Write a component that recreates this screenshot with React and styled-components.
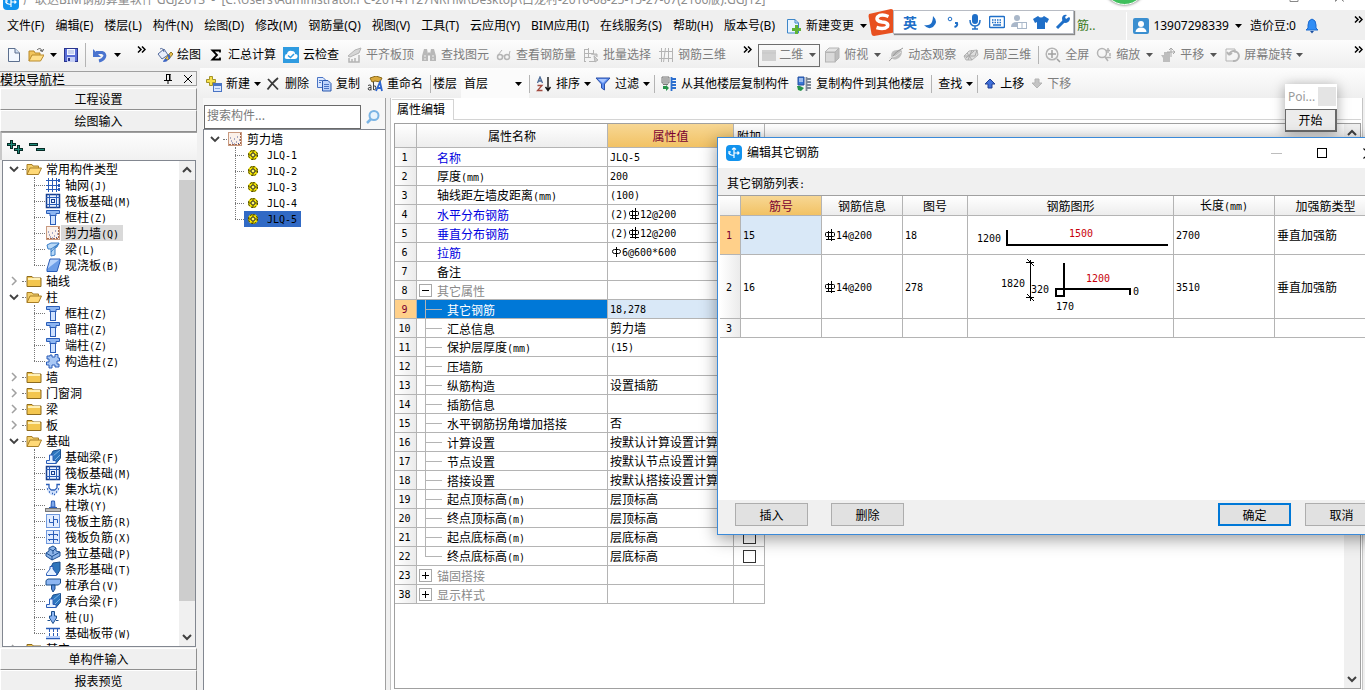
import React from "react";
import styled, { createGlobalStyle, css } from "styled-components";

const UI = `"Noto Sans", "Noto Sans CJK SC", sans-serif`;
const SONG = `"Noto Sans CJK SC", sans-serif`;

const GlobalStyle = createGlobalStyle`
  * { box-sizing: border-box; }
  html, body { margin: 0; height: 100%; overflow: hidden; }
  body { background: #f0f0f0; color: #000; font: 12px/16px ${SONG}; }
  button, input, select { font: inherit; color: inherit; margin: 0; }
  ul { list-style: none; margin: 0; padding: 0; }
  svg { display: block; flex: none; }
`;

/* ---------- text helpers ---------- */

const Latin = styled.span`
  font-family: "DejaVu Sans Mono", monospace;
  font-size: 10px;
`;
const Glyph = styled.svg`
  display: inline-block;
  vertical-align: -2px;
`;

const RebarMark = ({ ribbed }) => (
  <Glyph width="12" height="12" viewBox="0 0 12 12" fill="none" stroke="#000" aria-label="Φ">
    {ribbed
      ? <><rect x="1.500" y="3.500" width="9" height="4" rx="1" /><path d="M4.500 2V10M7.500 0V12M2 10.500H11" /></>
      : <><rect x="2.500" y="3.500" width="8" height="4" rx="2" /><path d="M6.500 1V11" /></>}
  </Glyph>
);

const Mixed = ({ children }) =>
  String(children)
    .split(/([\x20-\x7e]+|Φ|φ)/)
    .filter(Boolean)
    .map((part, i) => {
      if (part === "Φ") return <RebarMark key={i} ribbed />;
      if (part === "φ") return <RebarMark key={i} />;
      return /^[\x20-\x7e]/.test(part) ? <Latin key={i}>{part}</Latin> : part;
    });

/* ---------- icons ---------- */

const Svg = ({ children, w = 16, h = 16, ...rest }) => (
  <svg width={w} height={h} viewBox={`0 0 ${w} ${h}`} fill="none" aria-hidden="true" {...rest}>
    {children}
  </svg>
);
const Caret = ({ color = "#000" }) => (
  <Svg w={7} h={4}><path d="M0 0H7L3.5 4Z" fill={color} /></Svg>
);
const BLUE = "#2a5db8";
const GRAY = "#b4b4b4";

const icons = {
  newFile: <Svg><path d="M2 1.5H9L13.5 6V14.5H2.500V1.500Z" fill="#f2f8ff" stroke="#5c6f8e" /><path d="M9 1.500V6H13.500" fill="#cfe0f5" stroke="#5c6f8e" /></Svg>,
  open: <Svg><path d="M1 14V4H6L7 6H12V8" fill="#f2c55c" stroke="#b98a2a" /><path d="M1 14L4 8H16L12.500 14Z" fill="#ffdf8a" stroke="#b98a2a" /><path d="M9 3C11 1 13 1 14 4M12 3.500L14.500 4.500L15.500 2" stroke="#555" /></Svg>,
  save: <Svg><rect x="1.500" y="1.500" width="13" height="13" fill="#5a6fd8" stroke="#2a358f" /><rect x="4" y="2" width="8" height="6" fill="#f3f6ff" /><path d="M5 4H11M5 6H11" stroke="#9fb0e0" /><rect x="4" y="10" width="8" height="5" fill="#c6cff5" /><rect x="5" y="11" width="2" height="3" fill="#2a358f" /></Svg>,
  undo: <Svg><path d="M4 5.500H10Q14 7 12.500 10Q11 13 7 14" stroke="#4a74cf" strokeWidth="3" /><path d="M1 2V10H9Z" fill="#4a74cf" /></Svg>,
  paint: <Svg><path d="M1 7L7 2L11 8L5 12Z" fill="#e8eefb" stroke="#536a9c" /><path d="M3 2Q6 0 7 5" stroke="#536a9c" /><path d="M8 12L14 5L16 7L11 13Z" fill="#e9c14f" stroke="#94761f" /><path d="M6 15Q7 11 10 12Q12 15 6 15Z" fill="#3e66c4" /><path d="M11 8Q13 9 12 12" stroke="#3e66c4" strokeWidth="2" /></Svg>,
  sigma: <Svg><path d="M12 5.500V3.500H4.500L9 8L4.500 12.500H12V10.500" stroke="#000" strokeWidth="1.800" /></Svg>,
  cloud: <Svg><rect width="16" height="16" fill="#2f9be0" /><path d="M4 12Q1 12 2 9Q2 7 4 7Q5 3 9 4Q12 4 12 7Q15 7 14.500 10Q14 12 12 12Z" fill="#fff" /><path d="M5 8.500L7.500 10.500L11 7" stroke="#2f9be0" strokeWidth="1.500" /></Svg>,
  alignTop: <Svg><path d="M2 9L9 3L15 1L13 6L4 10Z" fill="#d6d6d6" stroke={GRAY} /><path d="M3 11V15H13V8M6 12V15M9 11V15" stroke={GRAY} strokeWidth="1.500" /></Svg>,
  find: <Svg><path d="M3 2H6L7 7V14H1V9ZM10 2H13L15 9V14H9V7Z" fill="#b8b8b8" /><path d="M7 7H9" stroke={GRAY} strokeWidth="3" /><path d="M3 9H5M11 9H13M3 12H5M11 12H13" stroke="#eee" /></Svg>,
  glasses: <Svg><circle cx="4" cy="10" r="2.500" stroke={GRAY} strokeWidth="1.500" /><circle cx="11" cy="10" r="2.500" stroke={GRAY} strokeWidth="1.500" /><path d="M6 9H9M2 8L6 3M13 8L14 4" stroke={GRAY} /></Svg>,
  batch: <Svg><path d="M1.500 2V14M1 2.500H5M1 6.500H10M1 10.500H8M6 14.500H12M5.500 1V11M10.500 3V8M3 14.500H1" stroke={GRAY} /><path d="M8 7H14V10M11 9L15 13L12 15Z" stroke={GRAY} fill="#ccc" /></Svg>,
  grid3d: <Svg><path d="M1 4.500H15M1 11.500H15M3.500 1V15M7.500 1L5.500 15M10.500 1V15M14.500 1V15" stroke={GRAY} /></Svg>,
  flat: <Svg w={14}><rect x="0" y="3" width="14" height="11" fill="#d0d0d0" /><path d="M0 6H14" stroke="#c6c6c6" /></Svg>,
  cube: <Svg><path d="M1 5L5 1H15L11 5Z" fill="#e4e4e4" stroke={GRAY} /><path d="M11 5L15 1V11L11 15Z" fill="#bdbdbd" stroke={GRAY} /><rect x="1.500" y="5.500" width="9.500" height="9.500" fill="#d9d9d9" stroke={GRAY} /></Svg>,
  orbit: <Svg><path d="M3 9Q3 3 9 3Q13 2 14 4Q14 10 9 12Q4 14 3 9Z" fill="#bebebe" /><path d="M1 14Q3 13 5 9T15 1" stroke="#969696" /><path d="M1 11Q9 10 13 5" stroke="#e5e5e5" /></Svg>,
  part3d: <Svg><path d="M1 9L6 4L14 3L15 8L9 13L3 13Z" fill="#ddd" stroke={GRAY} /><path d="M4 6L9 13M9 3L5 13M1 9H12L14 3M3 11L11 4" stroke="#a8a8a8" /></Svg>,
  fullView: <Svg><circle cx="7" cy="7" r="5.800" stroke={GRAY} strokeWidth="1.500" /><path d="M7 3V11M3 7H11M12 12L15 15" stroke="#a0a0a0" strokeWidth="1.500" /></Svg>,
  zoom: <Svg><circle cx="6" cy="6" r="4.500" stroke={GRAY} strokeWidth="1.500" /><path d="M9 10L12 14M12 1V6M10 3.500H14M10 10.500H15M14 6V9" stroke={GRAY} strokeWidth="1.500" /></Svg>,
  pan: <Svg><path d="M3 15V11L1 8L4 8V5H10V15Z" fill="#bdbdbd" /><path d="M11 1V10M7 5H15M9 3L11 1L13 3M13 3.500L15 5L13 7" stroke="#a8a8a8" /></Svg>,
  rotate: <Svg><path d="M2 2H11V6M2 2V14H10" stroke={GRAY} /><path d="M5 8A5 5 0 1 1 9 14M5 8L3 5M5 8L8 6" stroke={GRAY} strokeWidth="2" /></Svg>,
  create: <Svg><path d="M3.500 0.500H6.500V3.500H9.500V6.500H6.500V9.500H3.500V6.500H0.500V3.500H3.500Z" fill="#f7e14b" stroke="#a3932a" /><rect x="7.500" y="7.500" width="8" height="8" fill="#dbe8ff" stroke="#4a74c4" /><path d="M8 9H15" stroke="#4a74c4" strokeWidth="2" /><path d="M9 12.500H14" stroke="#8aa9dd" /></Svg>,
  cross: <Svg><path d="M3 3L13 13.500M13 2Q8 6 2.500 13.500" stroke="#3a3a3a" strokeWidth="1.800" /></Svg>,
  copy: <Svg><path d="M1.500 1.500H7L9.500 4V11.500H1.500Z" fill="#dbe8ff" stroke="#4a74c4" /><path d="M6.500 4.500H12L15 7.500V15H6.500Z" fill="#bcd3fb" stroke="#2b58ad" /><path d="M8 8.500H13M8 10.500H13M8 12.500H13M3 4.500H6M3 6.500H5" stroke="#4a74c4" /></Svg>,
  rename: <Svg><path d="M3 2L9 0L15 2L13 6L8 5L5 6Z" fill="#d9a93c" stroke="#8a6a1c" /><path d="M1 9.500Q4 8 4 10V14.500M4 11.500Q1 11 1 13Q1.500 15 4 13.500M6.500 6V14M6.500 10Q9 9 9 12Q8 15 6.500 13.500" stroke="#444" /><path d="M9 15L13 6L15 15M11 12H15" stroke="#2f66cf" strokeWidth="1.800" /></Svg>,
  sort: <Svg><path d="M1.500 7L4 1L6.500 7M2.500 5H5.500" stroke="#4b6a96" strokeWidth="1.300" /><path d="M1.500 9.500H6L1.500 14.500H6.500" stroke="#a2493f" strokeWidth="1.300" /><path d="M12 1V13M9.500 11L12 14.500L14.500 11" stroke="#111" strokeWidth="1.400" /></Svg>,
  filter: <Svg><path d="M1 2H15L9.500 8V14L6.500 12V8Z" fill="#5b8df0" stroke="#2c50a8" /><path d="M3 3H12L8 7Z" fill="#a9c6ff" /></Svg>,
  floorFrom: <Svg><path d="M1 1H8V7H1Z" fill="#e6e6e6" stroke="#777" /><path d="M2 3H7M2 5H7M2 8.500H7" stroke="#777" /><path d="M10 3H15M10 6H15M10 9H15M10 12H15M10.500 1V15" stroke="#2c6fcf" strokeWidth="1.800" /><path d="M2 10H5V9L8 12L5 15V13H2Z" fill="#27934a" /></Svg>,
  floorTo: <Svg><path d="M2 1H8V9H2Z" fill="#3b78d8" stroke="#234f9e" /><path d="M3 3H7M3 5H7" stroke="#fff" /><path d="M10 3H15M10 6H15M10 9H15M10 12H15M10.500 1V15" stroke="#7d8896" strokeWidth="1.800" /><path d="M1 10H4L8 12L5 15L2 14Z" fill="#27934a" /></Svg>,
  up: <Svg w={12}><path d="M6 3L11 8H8V12H4V8H1Z" fill="#3f6fd8" stroke="#1e3f94" /></Svg>,
  down: <Svg w={12}><path d="M6 12L11 7H8V3H4V7H1Z" fill="#c4c4c4" stroke="#b4b4b4" /></Svg>,
  change: <Svg><path d="M1.500 1.500H9L12.500 5V15H1.500Z" fill="#e8f4ff" stroke="#3e86c8" /><path d="M9 1.500V5H12.500" stroke="#3e86c8" /><path d="M9 7H12V10H15V13H12V16H9V13H6V10H9Z" fill="#5fb336" /></Svg>,
  user: <Svg><rect width="16" height="16" rx="2" fill="#3b8fd0" /><circle cx="8" cy="6" r="3" fill="#fff" /><path d="M2.500 14Q3 9.500 8 9.500T13.500 14Z" fill="#fff" /></Svg>,
  bell: <Svg><path d="M8 1Q12 2 12 7V10L14 12H2L4 10V7Q4 2 8 1Z" fill="#2f8df5" stroke="#1b6ad0" /><path d="M6 13H10L8 15.500Z" fill="#1a4fa0" /></Svg>,
  search: <Svg><circle cx="9" cy="6.500" r="4.500" stroke="#7ab4e4" strokeWidth="2" fill="#e8f4fd" /><path d="M6 10L2 14" stroke="#7ab4e4" strokeWidth="2.500" /></Svg>,
};

const memberIcons = {
  axis: <Svg><path d="M1 3.500H15M1 8.500H15M1 12.500H15M3.500 1V15M7.500 1V15M11.500 1V15" stroke={BLUE} /><path d="M14 2V5M14 7V10M14 11V14" stroke={BLUE} strokeWidth="2" /></Svg>,
  raft: <Svg><rect x="1.500" y="1.500" width="13" height="13" fill="#e8f1ff" stroke="#173f8f" strokeWidth="1.500" /><path d="M1 4.500H15M1 11.500H15M4.500 1V15M11.500 1V15" stroke={BLUE} /><rect x="6.500" y="6.500" width="3" height="3" stroke="#173f8f" /></Svg>,
  column: <Svg><path d="M1.500 1.500H14.500V4.500H11V7H5V4.500H1.500Z" fill="#8db6f2" stroke={BLUE} /><rect x="5.500" y="6.500" width="5" height="9" fill="#cfe2ff" stroke={BLUE} /></Svg>,
  wall: <Svg><rect x="1.500" y="1.500" width="13" height="13" fill="#fbf1ea" stroke="#c99a80" /><path d="M4 10H5M7 8H8M10 6H11M5 12H6M9 11H10M3 7H4M12 9H13M7 13H8M11 12.500H12" stroke="#4c5d9c" /><path d="M13.500 2V14M2 13.500H14" stroke="#a5684a" strokeDasharray="2 1" /></Svg>,
  beam: <Svg><path d="M2 4L6 2H14L12 6L10 7V14L6 15V8L3 8Z" fill="#b9d9f7" stroke="#3b7fc7" /><path d="M6 8L12 4M6 11L13 3M10 7L14 2" stroke="#3b7fc7" /></Svg>,
  slab: <Svg><path d="M5 2H15L12 12H2Z" fill="#b7d3fb" stroke={BLUE} /><path d="M2 12V14.500H12L15 4.500V2" fill="#6d9ee8" stroke={BLUE} /></Svg>,
  struct: <Svg><path d="M5 2H7V4H10V1.500H13V5H14.500V8H12V11H14V14H10V12H7V15H4V12H1.500V9H4V6H2V3H5Z" fill="#a9c8f5" stroke={BLUE} /></Svg>,
  fbeam: <Svg><path d="M5 8L8 2L15.500 0.500V9L11 14.500Z" fill="#2c76be" stroke="#1b4e8c" /><path d="M8 7L15 1M10 11L15 6" stroke="#7db2e6" /><path d="M1.500 14.500V11.500H4.500V6H8V11.500H11V14.500Z" fill="#e5f1ff" stroke={BLUE} /></Svg>,
  pit: <Svg><path d="M1 3.500H4V7L6 9H10L12 7V3.500H15" stroke={BLUE} strokeWidth="1.300" /><path d="M1 6Q3 14 8 14.500Q13 14 15 6L12 8L10 10H6L4 8Z" fill="#cfe0fb" /><path d="M2 8H3M13 8H14M4 11H5M7 12.500H8M11 11H12M9 13.500H10" stroke={BLUE} strokeWidth="1.500" /></Svg>,
  pier: <Svg><path d="M6 10L6.500 4H9.500L10 10Z" fill="#7fa9ea" stroke={BLUE} /><path d="M4 10.500H12" stroke={BLUE} /><rect x="0.500" y="11.500" width="15" height="3" fill="#bbb" stroke="#777" /></Svg>,
  rebarMain: <Svg><rect x="1.500" y="1.500" width="13" height="13" fill="#e2edff" stroke="#6f98dc" /><path d="M8.500 3V13M4.500 6V9.500H8.500M8.500 6.500H12.500V10" stroke={BLUE} /></Svg>,
  rebarNeg: <Svg><rect x="1.500" y="1.500" width="13" height="13" fill="#e2edff" stroke="#6f98dc" /><path d="M8.500 2V14M3 5.500H13M3 10.500H13M4.500 5V7M12.500 5V7M4.500 10V12M12.500 10V12" stroke={BLUE} /></Svg>,
  isolated: <Svg><path d="M1 8L4 6V3L8 1L11 3V6L15 7V11L7 15L1 11Z" fill="#8cb4e8" stroke="#1c4f93" /><path d="M1 8L7 11.500L15 7M7 11.500V15M5 4L8 6L11 3M8 6V9" stroke="#1c4f93" /></Svg>,
  strip: <Svg><path d="M5 8L8 2L15 1V9L12 14Z" fill="#3076bb" stroke="#1b4e8c" /><path d="M1.500 14.500V12.500L5 8V5.500H8V8L11.500 12.500V14.500Z" fill="#e5f1ff" stroke={BLUE} /></Svg>,
  cap: <Svg><path d="M1 3.500L3 2H15.500V6L13.500 8H1Z" fill="#8db6f2" stroke="#1b4e8c" /><path d="M6.500 8H10V12L8 15L6.500 12Z" fill="#5d8fdd" stroke="#1b4e8c" /></Svg>,
  pile: <Svg><path d="M6.500 2.500H9.500V7H11.500V9L8 14.500L4.500 9V7H6.500Z" fill="#8db6f2" stroke="#1b4e8c" /><path d="M2.500 11.500H5M11 11.500H13.500" stroke="#1b4e8c" /></Svg>,
  band: <Svg><path d="M1 3.500H15M1 13.500H15" stroke={BLUE} strokeWidth="1.500" /><path d="M4.500 4V13M8.500 4V13M12.500 4V13" stroke={BLUE} strokeDasharray="3 1" /><rect x="1" y="11" width="14" height="2" fill="#bcd3fb" /></Svg>,
  folder: <Svg><path d="M1 13.500V3.500H6L7.500 5H15V13.500Z" fill="#f3c64f" stroke="#8d6b1f" /><path d="M2 6H14" stroke="#fff0b5" strokeWidth="2" /></Svg>,
  folderOpen: <Svg><path d="M1 13.500V3.500H6L7 5H12.500V7" fill="#f3cf6b" stroke="#a87e26" /><path d="M1 13.500L4 7H15.500L12.500 13.500Z" fill="#ffd977" stroke="#a87e26" /></Svg>,
  gear: <Svg w={12} h={12}><circle cx="6" cy="6" r="5" fill="#f4e400" /><circle cx="6" cy="6" r="4.500" stroke="#2d2a00" strokeDasharray="2 1.500" /><path d="M6 1V11M1 6H11" stroke="#4d4900" /><circle cx="6" cy="6" r="2" fill="#fff96a" stroke="#333" /></Svg>,
};

const Logo = () => (
  <Svg>
    <rect width="16" height="16" rx="4" fill="#1293ee" />
    <path d="M8 3V13M6 4.500L8 3L10 4.500M3 8Q4 11 8 10M8 8H13M11.500 6.500L13 8L11.500 9.500M3 6V9M5 7H3" stroke="#fff" strokeWidth="1.200" />
  </Svg>
);

/* ---------- frame ---------- */

const Window = styled.div`
  position: relative;
  display: flex;
  flex-direction: column;
  height: 100vh;
  overflow: hidden;
`;
const TitleStrip = styled.header`
  display: flex;
  align-items: flex-end;
  gap: 4px;
  height: 10px;
  flex: none;
  padding: 0 20px 0 3px;
  overflow: hidden;
  background: #fff;
  color: #8c8c8c;
  font-family: ${UI};
  white-space: pre;
`;
const TitleText = styled.span`
  flex: 1;
  line-height: 20px;
`;
const MenuBar = styled.nav`
  display: flex;
  align-items: center;
  height: 30px;
  flex: none;
  padding: 2px 2px 0 7px;
  background: #efefef;
  font-family: ${UI};
  white-space: nowrap;
`;
const plainButton = css`
  display: flex;
  align-items: center;
  flex: none;
  padding: 0;
  border: 0;
  background: none;
  white-space: nowrap;
`;
const MenuItem = styled.button`
  ${plainButton}
  gap: 4px;
  margin-right: 11px;
`;
const Account = styled.div`
  display: flex;
  align-items: center;
  gap: 6px;
  margin-left: auto;
  padding: 0 32px 0 6px;
  height: 28px;
  border-left: 1px solid #fff;
`;
const AccountItem = styled(MenuItem)`
  margin-right: 2px;
`;
const Toolbar = styled.div`
  display: flex;
  align-items: center;
  height: ${(p) => p.$h}px;
  flex: none;
  padding: 2px 2px 0 6px;
  background: linear-gradient(#fdfdfd, #efefef);
  font-family: ${UI};
  white-space: nowrap;
`;
const ToolGroup = styled.div`
  display: flex;
  align-items: center;
  flex: none;
  padding-left: 5px;
`;
const ToolButton = styled.button`
  ${plainButton}
  height: 20px;
  gap: 4px;
  margin-right: ${(p) => (p.$bare ? 6 : 7)}px;
  color: ${(p) => (p.$off ? "#7d7d7d" : "#000")};
`;
const CaretSlot = styled.span`
  display: flex;
  padding-left: ${(p) => (p.$tight ? 0 : 2)}px;
  margin-right: ${(p) => (p.$tight ? -3 : 0)}px;
`;
const Divider = styled.i`
  width: 1px;
  height: ${(p) => p.$h || 18}px;
  flex: none;
  margin-right: ${(p) => (p.$tight ? 2 : 6)}px;
  background: #b4b4b4;
`;
const More = styled.button`
  ${plainButton}
  align-self: flex-start;
  margin: 4px ${(p) => (p.$end ? "0" : "6px")} 0 ${(p) => (p.$end ? "auto" : "10px")};
`;
const MoreIcon = ({ end }) => (
  <More $end={end} aria-label="更多">
    <Svg w={9} h={7}><path d="M1 0.500L4 3.500L1 6.500M5 0.500L8 3.500L5 6.500" stroke="#000" strokeWidth="1.500" /></Svg>
  </More>
);
const MenuMore = styled(More)`
  margin: 4px 0 0;
`;
const ComboLabel = styled.label`
  margin-right: 4px;
`;
const Combo = styled.span`
  display: flex;
  align-items: center;
  gap: 3px;
  flex: none;
  width: ${(p) => p.$w}px;
  height: ${(p) => (p.$boxed ? 23 : 28)}px;
  margin-right: ${(p) => (p.$boxed ? 4 : 0)}px;
  padding: 0 ${(p) => (p.$boxed ? 3 : 7)}px 0 3px;
  border: ${(p) => (p.$boxed ? "1px solid #6e6e6e" : 0)};
  background: ${(p) => (p.$boxed ? "none" : "#fbfbfb")};
  color: ${(p) => (p.$boxed ? "#7d7d7d" : "#000")};
`;
const Select = styled.select`
  flex: 1;
  min-width: 0;
  padding: 0;
  border: 0;
  background: none;
  appearance: none;
  color: inherit;
`;

const Tool = ({ icon, children, off, caret, tight }) => (
  <ToolButton $off={off} $bare={!children} disabled={off}>
    {icons[icon]}
    {children}
    {caret && <CaretSlot $tight={tight}><Caret color={off ? "#555" : "#000"} /></CaretSlot>}
  </ToolButton>
);

const Workspace = styled.div`
  display: flex;
  flex: 1;
  min-height: 0;
`;

/* ---------- navigation panel ---------- */

const Nav = styled.aside`
  display: flex;
  flex-direction: column;
  width: 197px;
  flex: none;
  padding-top: 3px;
  margin: 0 3px -2px 0;
`;
const NavTitle = styled.div`
  display: flex;
  align-items: center;
  gap: 12px;
  height: 15px;
  margin-bottom: 2px;
  padding-right: 4px;
  border: 1px solid #a0a0a0;
  border-left: 0;
  font-size: 13px;
  line-height: 13px;
`;
const NavName = styled.span`
  flex: 1;
`;
const NavButton = styled.button`
  height: 22px;
  flex: none;
  padding: 0;
  border: 1px solid #8f8f8f;
  border-top-color: #fff;
  border-left-color: #fff;
  background: #f0f0f0;
  font-size: 12px;
  line-height: 20px;
`;
const NavTools = styled.div`
  display: flex;
  gap: 6px;
  height: 28px;
  flex: none;
  padding: 7px 5px;
  border-top: 1px solid #a0a0a0;
  border-left: 2px solid #c8c8c8;
  background: linear-gradient(#fdfdfd, #f1f1f1);
`;
const IconButton = styled.button`
  ${plainButton}
`;
const TreeBox = styled.div`
  display: flex;
  flex: 1;
  min-height: 0;
  margin: 0 1px 1px 2px;
  border: 1px solid #828790;
  background: #fff;
`;
const TreeView = styled.ul`
  flex: 1;
  overflow: hidden;
  padding: ${(p) => p.$top}px 0 0 5px;
`;
const TreeRow = styled.div`
  display: flex;
  align-items: center;
  height: 16px;
  white-space: nowrap;
`;
const Twisty = styled.button`
  ${plainButton}
  justify-content: center;
  width: 12px;
  height: 16px;
  margin-right: 2px;
`;
const Children = styled.ul`
  position: relative;
  margin-left: 26px;
  &::before {
    content: "";
    position: absolute;
    top: 0;
    bottom: 8px;
    left: 0;
    border-left: 1px dotted #777;
  }
`;
const Stem = styled.i`
  width: ${(p) => p.$w}px;
  border-top: 1px dotted #777;
`;
const RowLabel = styled.span`
  height: 16px;
  line-height: 16px;
  padding: 0 4px;
  background: ${(p) => (p.$picked ? "#d9d9d9" : "none")};
`;
const MemberRow = styled.div`
  display: flex;
  align-items: center;
  gap: 8px;
  width: 57px;
  height: 16px;
  padding-left: 3px;
  background: ${(p) => (p.$selected ? "#316ac5" : "none")};
`;
const ScrollBar = styled.div`
  display: flex;
  flex-direction: column;
  align-items: center;
  justify-content: space-between;
  width: 16px;
  flex: none;
  padding: 5px 0;
  background: #f0f0f0;
`;
const Thumb = styled.i`
  flex: 1;
  width: 16px;
  margin: 6px 0 32px;
  background: #cdcdcd;
`;
const Chevron = ({ dir, color = "#404040" }) => {
  const d = { up: "M1 6L5 2L9 6", down: "M1 2L5 6L9 2" }[dir];
  return <Svg w={10} h={8}><path d={d} stroke={color} strokeWidth="2" /></Svg>;
};
const Twist = ({ open }) => (
  <Twisty aria-label={open ? "折叠" : "展开"}>
    {open
      ? <Svg w={10} h={8}><path d="M1 2L5 6L9 2" stroke="#404040" strokeWidth="1.800" /></Svg>
      : <Svg w={8} h={10}><path d="M2 1L6 5L2 9" stroke="#a0a0a0" strokeWidth="1.500" /></Svg>}
  </Twisty>
);

const navTree = [
  { name: "常用构件类型", items: [["axis", "轴网(J)"], ["raft", "筏板基础(M)"], ["column", "框柱(Z)"], ["wall", "剪力墙(Q)", true], ["beam", "梁(L)"], ["slab", "现浇板(B)"]] },
  { name: "轴线" },
  { name: "柱", items: [["column", "框柱(Z)"], ["column", "暗柱(Z)"], ["column", "端柱(Z)"], ["struct", "构造柱(Z)"]] },
  { name: "墙" },
  { name: "门窗洞" },
  { name: "梁" },
  { name: "板" },
  { name: "基础", items: [["fbeam", "基础梁(F)"], ["raft", "筏板基础(M)"], ["pit", "集水坑(K)"], ["pier", "柱墩(Y)"], ["rebarMain", "筏板主筋(R)"], ["rebarNeg", "筏板负筋(X)"], ["isolated", "独立基础(P)"], ["strip", "条形基础(T)"], ["cap", "桩承台(V)"], ["fbeam", "承台梁(F)"], ["pile", "桩(U)"], ["band", "基础板带(W)"]] },
  { name: "其它" },
];

const Navigation = () => (
  <Nav>
    <NavTitle>
      <NavName>模块导航栏</NavName>
      <IconButton aria-label="固定"><Svg w={8} h={10}><path d="M2 0.500H6.500M2.500 0V6M5.500 0V6M6 0V6M0 6.500H8M4 7V10" stroke="#000" /></Svg></IconButton>
      <IconButton aria-label="关闭"><Svg w={8} h={8}><path d="M0 0L8 8M8 0L0 8" stroke="#000" /></Svg></IconButton>
    </NavTitle>
    <NavButton>工程设置</NavButton>
    <NavButton>绘图输入</NavButton>
    <NavTools>
      <IconButton aria-label="全部展开"><Svg w={16} h={14}><path d="M4.500 0V9M0 4.500H9M11.500 5V14M7 9.500H16" stroke="#072b26" strokeWidth="3" /><path d="M4.500 1V8M1 4.500H8M11.500 6V13M8 9.500H15" stroke="#1d8a78" /></Svg></IconButton>
      <IconButton aria-label="全部折叠"><Svg w={16} h={14}><path d="M0 4.500H9M7 9.500H16" stroke="#072b26" strokeWidth="3" /><path d="M1 4.500H8M8 9.500H15" stroke="#1d8a78" /></Svg></IconButton>
    </NavTools>
    <TreeBox>
      <TreeView $top={0}>
        {navTree.map((g) => (
          <li key={g.name}>
            <TreeRow>
              <Twist open={!!g.items} />
              <Stem $w={4} />
              {memberIcons[g.items ? "folderOpen" : "folder"]}
              <RowLabel>{g.name}</RowLabel>
            </TreeRow>
            {g.items && (
              <Children>
                {g.items.map(([icon, label, picked]) => (
                  <li key={label}>
                    <TreeRow>
                      <Stem $w={11} />
                      {memberIcons[icon]}
                      <RowLabel $picked={picked}><Mixed>{label}</Mixed></RowLabel>
                    </TreeRow>
                  </li>
                ))}
              </Children>
            )}
          </li>
        ))}
      </TreeView>
      <ScrollBar><Chevron dir="up" /><Thumb /><Chevron dir="down" /></ScrollBar>
    </TreeBox>
    <NavButton>单构件输入</NavButton>
    <NavButton>报表预览</NavButton>
  </Nav>
);

/* ---------- member list ---------- */

const MainArea = styled.main`
  display: flex;
  flex-direction: column;
  flex: 1;
  min-width: 0;
`;
const Panels = styled.div`
  display: flex;
  flex: 1;
  min-height: 0;
  padding-left: 3px;
`;
const MemberPanel = styled.section`
  display: flex;
  flex-direction: column;
  width: 183px;
  flex: none;
  padding-top: 6px;
  margin-right: 4px;
  border-right: 1px solid #a0a0a0;
  background: #f7f7f7;
`;
const SearchRow = styled.form`
  display: flex;
  align-items: center;
  gap: 4px;
  height: 25px;
  padding-left: 1px;
`;
const SearchInput = styled.input`
  width: 157px;
  height: 24px;
  padding: 0 2px 4px;
  border: 1px solid #6a6a6a;
  background: #fff;
  &::placeholder { color: #7a7a7a; opacity: 1; }
`;
const MemberBox = styled(TreeBox)`
  margin: 0;
  border-width: 1px 0 0 1px;
`;

const Members = () => (
  <MemberPanel>
    <SearchRow onSubmit={(e) => e.preventDefault()}>
      <SearchInput type="text" aria-label="搜索构件" placeholder="搜索构件..." />
      <IconButton aria-label="搜索">{icons.search}</IconButton>
    </SearchRow>
    <MemberBox>
      <TreeView $top={1}>
        <li>
          <TreeRow><Twist open /><Stem $w={4} />{memberIcons.wall}<RowLabel>剪力墙</RowLabel></TreeRow>
          <Children>
            {[1, 2, 3, 4, 5].map((n) => (
              <li key={n}>
                <TreeRow>
                  <Stem $w={9} />
                  <MemberRow $selected={n === 5}>{memberIcons.gear}<span><Mixed>{`JLQ-${n}`}</Mixed></span></MemberRow>
                </TreeRow>
              </li>
            ))}
          </Children>
        </li>
      </TreeView>
    </MemberBox>
  </MemberPanel>
);

/* ---------- property grid ---------- */

const LINE = "#b4b4b4";
const Properties = styled.section`
  display: flex;
  flex-direction: column;
  flex: 1;
  min-width: 0;
  margin-right: 2px;
  padding: 1px;
  border-left: 1px solid #c4c4c4;
  border-right: 1px solid #c4c4c4;
  background: #fff;
`;
const TabStrip = styled.div`
  display: flex;
  height: 21px;
  flex: none;
  margin-bottom: 3px;
  border-bottom: 1px solid #d4d4d4;
`;
const Tab = styled.button`
  height: 21px;
  padding: 0 8px 2px 5px;
  border: 1px solid #d4d4d4;
  border-width: 1px 1px 0 0;
  background: #fff;
`;
const GridPanel = styled.div`
  display: flex;
  flex: 1;
  min-height: 0;
  margin-left: 2px;
  border: 1px solid #a0a0a0;
`;
const GridArea = styled.div`
  flex: 1;
  min-width: 0;
  background: linear-gradient(#fff, #efefef) top / 100% 24px no-repeat;
`;
const Grid = styled.table`
  width: ${(p) => p.$w};
  table-layout: fixed;
  border-collapse: separate;
  border-spacing: 0;
  background: #fff;
  white-space: nowrap;
`;
const HeadCell = styled.th`
  height: ${(p) => p.$h}px;
  padding: 0;
  border-right: 1px solid ${LINE};
  border-bottom: 1px solid ${LINE};
  background: ${(p) => (p.$hot ? "linear-gradient(#f7d794, #f2c264)" : "linear-gradient(#fff, #ededed)")};
  color: ${(p) => (p.$hot ? "#7a0030" : "#000")};
  font-weight: normal;
  overflow: hidden;
`;
const NumCell = styled.th`
  height: ${(p) => p.$h || 19}px;
  padding: 0 2px 0 0;
  border-right: 1px solid ${LINE};
  border-bottom: 1px solid ${LINE};
  background: ${(p) => (p.$hot ? "#ffd08a" : "linear-gradient(90deg, #fff, #ebebeb)")};
  color: ${(p) => (p.$hot ? "#7a0030" : "#000")};
  font-weight: normal;
`;
const Cell = styled.td`
  padding: 0 0 0 ${(p) => (p.$flush ? 0 : 2)}px;
  border-right: 1px solid ${LINE};
  border-bottom: 1px solid ${LINE};
  background: ${(p) => (p.$bg ? p.$bg : "#fff")};
  overflow: hidden;
`;
const NameBox = styled.div`
  display: flex;
  align-items: center;
  height: 18px;
  padding-left: ${(p) => (p.$root ? 20 : 2)}px;
  padding-top: 1px;
  color: ${(p) => p.$color};
`;
const Expander = styled.button`
  ${plainButton}
  width: 13px;
  height: 13px;
  margin-right: 5px;
  border: 1px solid #a8a8a8;
  background: #fff;
`;
const Branch = styled.i`
  align-self: stretch;
  position: relative;
  width: 17px;
  margin: -1px 5px 0 6px;
  &::before {
    content: "";
    position: absolute;
    left: 0;
    top: 0;
    bottom: ${(p) => (p.$last ? 9 : 0)}px;
    border-left: 1px solid ${LINE};
  }
  &::after {
    content: "";
    position: absolute;
    left: 0;
    right: 0;
    top: 9px;
    border-top: 1px solid ${LINE};
  }
`;
const Check = styled.input`
  display: block;
  width: 13px;
  height: 13px;
  margin: 0 auto;
  border: 1px solid #333;
  background: #fff;
  appearance: none;
`;

const props = [
  [1, "名称", "JLQ-5", "link"],
  [2, "厚度(mm)", "200", "root"],
  [3, "轴线距左墙皮距离(mm)", "(100)", "root"],
  [4, "水平分布钢筋", "(2)Φ12@200", "link"],
  [5, "垂直分布钢筋", "(2)Φ12@200", "link"],
  [6, "拉筋", "φ6@600*600", "link"],
  [7, "备注", "", "root"],
  [8, "其它属性", "", "open"],
  [9, "其它钢筋", "18,278", "child"],
  [10, "汇总信息", "剪力墙", "child"],
  [11, "保护层厚度(mm)", "(15)", "child"],
  [12, "压墙筋", "", "child"],
  [13, "纵筋构造", "设置插筋", "child"],
  [14, "插筋信息", "", "child"],
  [15, "水平钢筋拐角增加搭接", "否", "child"],
  [16, "计算设置", "按默认计算设置计算", "child"],
  [17, "节点设置", "按默认节点设置计算", "child"],
  [18, "搭接设置", "按默认搭接设置计算", "child"],
  [19, "起点顶标高(m)", "层顶标高", "child"],
  [20, "终点顶标高(m)", "层顶标高", "child"],
  [21, "起点底标高(m)", "层底标高", "child"],
  [22, "终点底标高(m)", "层底标高", "last"],
  [23, "锚固搭接", "", "closed"],
  [38, "显示样式", "", "closed"],
];

const PropName = ({ name, kind, hot }) => {
  const root = kind === "root" || kind === "link";
  const group = kind === "open" || kind === "closed";
  const color = hot ? "#fff" : kind === "link" ? "#0000e0" : group ? "#8a8a8a" : "#000";
  return (
    <NameBox $root={root} $color={color}>
      {group && (
        <Expander aria-label={name}>
          <Svg w={11} h={11}><path d={kind === "open" ? "M2 5.500H9" : "M2 5.500H9M5.500 2V9"} stroke="#000" /></Svg>
        </Expander>
      )}
      {!root && !group && <Branch $last={kind === "last"} />}
      <span><Mixed>{name}</Mixed></span>
    </NameBox>
  );
};

const PropertyEditor = () => (
  <Properties>
    <TabStrip><Tab>属性编辑</Tab></TabStrip>
    <GridPanel>
      <GridArea>
        <Grid $w="370px">
          <colgroup><col width="22" /><col width="191" /><col width="126" /><col width="31" /></colgroup>
          <thead>
            <tr><HeadCell $h={24} /><HeadCell>属性名称</HeadCell><HeadCell $hot>属性值</HeadCell><HeadCell>附加</HeadCell></tr>
          </thead>
          <tbody>
            {props.map(([n, name, value, kind]) => {
              const hot = n === 9;
              return (
                <tr key={n}>
                  <NumCell scope="row" $hot={hot}><Mixed>{n}</Mixed></NumCell>
                  <Cell $flush $bg={hot && "#0078d7"}><PropName name={name} kind={kind} hot={hot} /></Cell>
                  <Cell $bg={hot && "#d9e8f7"}><Mixed>{value}</Mixed></Cell>
                  <Cell $flush>{n > 1 && n < 23 && n !== 8 && <Check type="checkbox" aria-label={`附加 ${name}`} />}</Cell>
                </tr>
              );
            })}
          </tbody>
        </Grid>
      </GridArea>
      <ScrollBar><Chevron dir="up" /><Chevron dir="down" /></ScrollBar>
    </GridPanel>
  </Properties>
);

/* ---------- rebar dialog ---------- */

const Dialog = styled.section`
  position: absolute;
  top: 137px;
  left: 717px;
  right: -25px;
  display: flex;
  flex-direction: column;
  border: 1px solid #3b8ad9;
  background: #f0f0f0;
  box-shadow: 0 4px 16px rgba(0, 0, 0, 0.4);
`;
const DialogTitle = styled.header`
  display: flex;
  align-items: center;
  gap: 5px;
  height: 30px;
  padding-left: 8px;
  background: #fff;
  font-family: ${UI};
`;
const DialogName = styled.h2`
  flex: 1;
  margin: 0;
  font: inherit;
`;
const SystemButton = styled.button`
  ${plainButton}
  justify-content: center;
  width: 41px;
  height: 29px;
`;
const DialogLabel = styled.p`
  height: 27px;
  margin: 0;
  padding: 7px 9px 0;
`;
const DialogBody = styled.div`
  height: 305px;
  padding-left: 2px;
  border-top: 1px solid #a0a0a0;
  background: #fff;
`;
const ShapeCell = styled(Cell)`
  padding: 0;
`;
const Shape = styled.svg`
  font: 10px "DejaVu Sans Mono", monospace;
`;
const DialogFooter = styled.footer`
  display: flex;
  gap: 23px;
  height: 34px;
  padding: 3px 11px 0 17px;
`;
const PushButton = styled.button`
  width: 73px;
  height: 23px;
  padding: 0;
  border: ${(p) => (p.$primary ? "2px solid #0078d7" : "1px solid #adadad")};
  background: #e1e1e1;
`;
const Confirm = styled.div`
  display: flex;
  gap: 14px;
  margin-left: auto;
`;

const LShape = () => (
  <Shape width="205" height="38" fill="#000">
    <text x="9" y="26">1200</text>
    <path d="M39 14V29H200" fill="none" stroke="#000" strokeWidth="2" />
    <text x="101" y="21" fill="#c8000a">1500</text>
  </Shape>
);
const HookShape = () => (
  <Shape width="205" height="63" fill="#000">
    <text x="33" y="32">1820</text>
    <path d="M62.500 5V46M58 7.500H66M58 42.500H66M59 4L66 11M59 39L66 46" fill="none" stroke="#000" />
    <text x="63" y="38">320</text>
    <path d="M96 8V41H88V34H162V40" fill="none" stroke="#000" strokeWidth="2" />
    <text x="165" y="40">0</text>
    <text x="118" y="27" fill="#c8000a">1200</text>
    <text x="88" y="55">170</text>
  </Shape>
);

const rebarRows = [
  { n: 1, h: 39, id: "15", info: "Φ14@200", no: "18", shape: <LShape />, len: "2700", type: "垂直加强筋" },
  { n: 2, h: 64, id: "16", info: "Φ14@200", no: "278", shape: <HookShape />, len: "3510", type: "垂直加强筋" },
  { n: 3, h: 19, id: "", info: "", no: "", len: "", type: "" },
];

const RebarDialog = () => (
  <Dialog role="dialog" aria-label="编辑其它钢筋">
    <DialogTitle>
      <Logo />
      <DialogName>编辑其它钢筋</DialogName>
      <SystemButton aria-label="最小化"><Svg w={11} h={11}><path d="M0 5.500H11" stroke="#bdbdbd" /></Svg></SystemButton>
      <SystemButton aria-label="最大化"><Svg w={11} h={11}><rect x="0.500" y="0.500" width="9" height="9" stroke="#000" /></Svg></SystemButton>
      <SystemButton aria-label="关闭"><Svg w={11} h={11}><path d="M0.500 0.500L10.500 10.500M10.500 0.500L0.500 10.500" stroke="#000" strokeWidth="1.200" /></Svg></SystemButton>
    </DialogTitle>
    <DialogLabel><Mixed>其它钢筋列表:</Mixed></DialogLabel>
    <DialogBody>
      <Grid $w="657px">
        <colgroup><col width="21" /><col width="81" /><col width="81" /><col width="65" /><col width="206" /><col width="101" /><col width="102" /></colgroup>
        <thead>
          <tr>
            <HeadCell $h={20} />
            <HeadCell $hot>筋号</HeadCell>
            {["钢筋信息", "图号", "钢筋图形", "长度(mm)", "加强筋类型"].map((t) => <HeadCell key={t}><Mixed>{t}</Mixed></HeadCell>)}
          </tr>
        </thead>
        <tbody>
          {rebarRows.map((r) => (
            <tr key={r.n}>
              <NumCell scope="row" $h={r.h} $hot={r.n === 1}><Mixed>{r.n}</Mixed></NumCell>
              <Cell $bg={r.n === 1 && "#d9e8f7"}><Mixed>{r.id}</Mixed></Cell>
              <Cell><Mixed>{r.info}</Mixed></Cell>
              <Cell><Mixed>{r.no}</Mixed></Cell>
              <ShapeCell>{r.shape}</ShapeCell>
              <Cell><Mixed>{r.len}</Mixed></Cell>
              <Cell>{r.type}</Cell>
            </tr>
          ))}
        </tbody>
      </Grid>
    </DialogBody>
    <DialogFooter>
      <PushButton>插入</PushButton>
      <PushButton>删除</PushButton>
      <Confirm><PushButton $primary>确定</PushButton><PushButton>取消</PushButton></Confirm>
    </DialogFooter>
  </Dialog>
);

/* ---------- floating widgets ---------- */

const MiniWindow = styled.section`
  position: absolute;
  top: 84px;
  right: 28px;
  width: 52px;
  box-shadow: 0 2px 12px rgba(0, 0, 0, 0.35);
`;
const MiniTitle = styled.div`
  display: flex;
  align-items: center;
  justify-content: space-between;
  height: 25px;
  padding: 0 1px 0 3px;
  background: #fff;
  color: #9a9a9a;
  font-family: ${UI};
`;
const MiniClose = styled.button`
  width: 18px;
  height: 19px;
  padding: 0;
  border: 0;
  background: #e4e4e4;
`;
const MiniStart = styled.button`
  display: block;
  width: 100%;
  height: 23px;
  padding: 0;
  border: 1px solid #696969;
  border-width: 1px 2px 2px 1px;
  background: #ececec;
`;
const ImeBar = styled.div`
  position: absolute;
  top: 8px;
  left: 868px;
  display: flex;
  align-items: center;
`;
const ImeKeys = styled.div`
  display: flex;
  align-items: center;
  gap: 6px;
  height: 24px;
  margin-left: -3px;
  padding: 0 2px 0 9px;
  border: 1px solid #b8bcc4;
  background: #fff;
  box-shadow: 1px 1px 1px #888;
  color: #1f6fc8;
  font-weight: bold;
  font-size: 14px;
`;
const Ball = styled.div`
  position: absolute;
  top: -38px;
  right: 219px;
  width: 43px;
  height: 43px;
  border: 1px solid #fff;
  border-radius: 50%;
  background: #3fbf5c;
  box-shadow: 0 0 3px #555;
`;
const KEY = "#1f6fc8";

const Ime = () => (
  <ImeBar>
    <Svg w={28} h={28}>
      <path d="M1 6L23 1Q25 1 25.500 3L28 22Q28 24 26 24.500L6 28Q4 28 3.500 26L0.500 8Z" fill="#e8501f" />
      <path d="M20.500 8.500Q13 5.500 9.500 9Q7.500 13 14 14Q21 14.500 19.500 18.500Q16 22 8.500 19.500" stroke="#fff" strokeWidth="3.500" />
    </Svg>
    <ImeKeys>
      <span>英</span>
      <Svg><path d="M10 2Q16 8 10 13Q5 16 1 11Q7 12 9 8Q10 5 10 2Z" fill={KEY} /></Svg>
      <Svg><circle cx="5" cy="5" r="1.800" stroke={KEY} /><path d="M10 9H12Q13 12 9.500 13" stroke={KEY} strokeWidth="2" /></Svg>
      <Svg><rect x="5" y="0" width="6" height="10" rx="3" fill={KEY} /><path d="M3 6Q3 12 8 12T13 6M8 12V15M5 15H11" stroke={KEY} strokeWidth="1.500" /></Svg>
      <Svg><rect x="0.500" y="2.500" width="15" height="11" rx="1" stroke={KEY} strokeWidth="1.500" /><path d="M3 6H13M3 8.500H13" stroke={KEY} strokeWidth="1.500" strokeDasharray="1.500 1" /><path d="M4 11H12" stroke={KEY} strokeWidth="1.500" /></Svg>
      <Svg><circle cx="6" cy="4" r="3" fill="#a9b7c9" /><path d="M0 13Q0 8 6 8V13Z" fill="#a9b7c9" /><rect x="6.500" y="8.500" width="9" height="6" stroke="#a9b7c9" fill="#fff" /><path d="M11 9V14" stroke="#a9b7c9" /></Svg>
      <Svg><path d="M5 2Q8 5 11 2L16 5L14 9L12 8V15H4V8L2 9L0 5Z" fill={KEY} /></Svg>
      <Svg><path d="M2 14L9 7" stroke={KEY} strokeWidth="3" /><path d="M14 3L11 5L10 3L12 1Q8 0 7 4Q7 9 11 9Q15 8 15 4Z" fill={KEY} /></Svg>
    </ImeKeys>
  </ImeBar>
);

const AfterIme = styled.span`
  margin-left: 199px;
  color: #3a7a1c;
`;

const menus = ["文件(F)", "编辑(E)", "楼层(L)", "构件(N)", "绘图(D)", "修改(M)", "钢筋量(Q)", "视图(V)", "工具(T)", "云应用(Y)", "BIM应用(I)", "在线服务(S)", "帮助(H)", "版本号(B)"];

export default function App() {
  return (
    <Window>
      <GlobalStyle />
      <TitleStrip>
        <Logo />
        <TitleText>{"广联达BIM钢筋算量软件 GGJ2013  -  [C:\\Users\\Administrator.PC-20141127NRHM\\Desktop\\白龙村-2016-08-25-15-27-07(2166版).GGJ12]"}</TitleText>
        <Svg w={56} h={10}><path d="M1 0V1.500H9V0M46 1L49 -2M54 1L51 -2M46 1.500L48 0M55 1.500L53 0" stroke="#888" /></Svg>
      </TitleStrip>
      <MenuBar>
        {menus.map((m) => <MenuItem key={m}>{m}</MenuItem>)}
        <MenuItem>{icons.change}新建变更<CaretSlot><Caret /></CaretSlot></MenuItem>
        <AfterIme>筋..</AfterIme>
        <Account>
          <AccountItem>{icons.user}13907298339<CaretSlot><Caret /></CaretSlot></AccountItem>
          <AccountItem>造价豆:0</AccountItem>
          <AccountItem aria-label="通知">{icons.bell}</AccountItem>
        </Account>
        <MenuMore aria-label="更多菜单">
          <Svg w={9} h={7}><path d="M1 0.500L4 3.500L1 6.500M5 0.500L8 3.500L5 6.500" stroke="#000" strokeWidth="1.500" /></Svg>
        </MenuMore>
      </MenuBar>
      <Toolbar $h={28}>
        <Tool icon="newFile" />
        <Tool icon="open" caret />
        <Tool icon="save" />
        <Divider $h={24} />
        <Tool icon="undo" caret />
        <MoreIcon />
        <ToolGroup>
          <Tool icon="paint">绘图</Tool>
          <Tool icon="sigma">汇总计算</Tool>
          <Tool icon="cloud">云检查</Tool>
          <Tool icon="alignTop" off>平齐板顶</Tool>
          <Tool icon="find" off>查找图元</Tool>
          <Tool icon="glasses" off>查看钢筋量</Tool>
          <Tool icon="batch" off>批量选择</Tool>
          <Tool icon="grid3d" off>钢筋三维</Tool>
        </ToolGroup>
        <MoreIcon />
        <Combo $w={62} $boxed>{icons.flat}<Select aria-label="视图模式"><option>二维</option></Select><Caret color="#555" /></Combo>
        <Tool icon="cube" off caret>俯视</Tool>
        <Tool icon="orbit" off>动态观察</Tool>
        <Tool icon="part3d" off>局部三维</Tool>
        <Divider />
        <Tool icon="fullView" off>全屏</Tool>
        <Tool icon="zoom" off caret>缩放</Tool>
        <Tool icon="pan" off caret>平移</Tool>
        <Tool icon="rotate" off caret tight>屏幕旋转</Tool>
        <MoreIcon end />
      </Toolbar>
      <Workspace>
        <Navigation />
        <MainArea>
          <Toolbar $h={30}>
            <Tool icon="create" caret tight>新建</Tool>
            <Tool icon="cross">删除</Tool>
            <Tool icon="copy">复制</Tool>
            <Tool icon="rename">重命名</Tool>
            <Divider $tight />
            <ComboLabel htmlFor="floor">楼层</ComboLabel>
            <Combo $w={68}><Select id="floor"><option>首层</option></Select><Caret /></Combo>
            <Divider />
            <Tool icon="sort" caret tight>排序</Tool>
            <Tool icon="filter" caret tight>过滤</Tool>
            <Divider />
            <Tool icon="floorFrom">从其他楼层复制构件</Tool>
            <Tool icon="floorTo">复制构件到其他楼层</Tool>
            <Divider />
            <Tool caret tight>查找</Tool>
            <Divider />
            <Tool icon="up">上移</Tool>
            <Tool icon="down" off>下移</Tool>
          </Toolbar>
          <Panels>
            <Members />
            <PropertyEditor />
          </Panels>
        </MainArea>
      </Workspace>
      <Ime />
      <Ball />
      <MiniWindow>
        <MiniTitle>Poi...<MiniClose aria-label="关闭" /></MiniTitle>
        <MiniStart>开始</MiniStart>
      </MiniWindow>
      <RebarDialog />
    </Window>
  );
}
